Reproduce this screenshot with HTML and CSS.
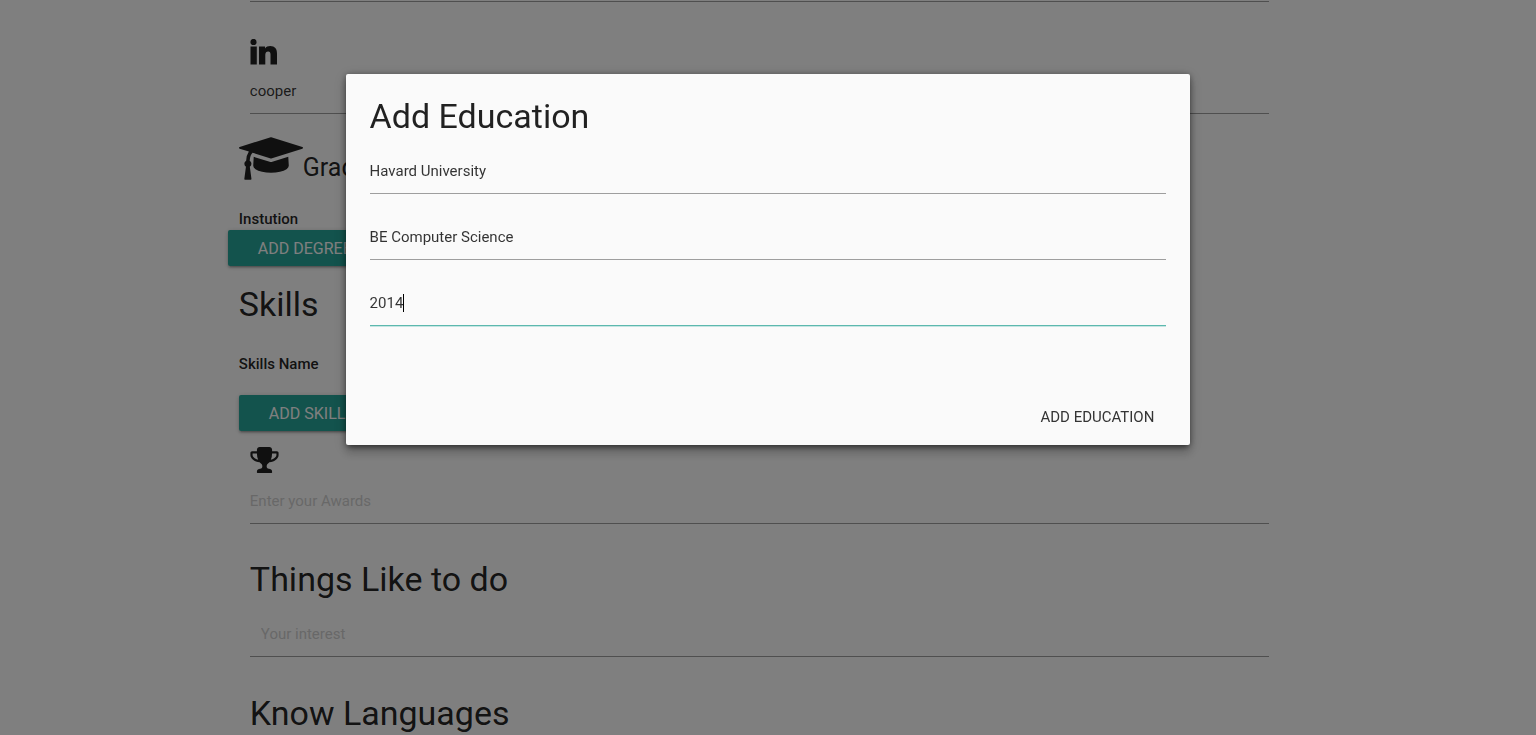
FILE: index.html
```html
<!DOCTYPE html>
<html lang="en">
<head>
<meta charset="utf-8">
<title>Add Education</title>
<link rel="stylesheet" href="styles.css">
</head>
<body>
<main class="page">
  <div class="container">
    <section class="inset previous"></section>

    <section class="inset profile">
      <svg class="icon-linkedin" viewBox="0 0 27 26" aria-hidden="true"><circle cx="3.500" cy="3" r="3.100"/><path d="M.5 7.500h6.300V25.500H.5zM9 7.500h6v2c1.200-1.600 3-2.400 5.200-2.400 4.700 0 6.800 2.800 6.800 7.400v11h-6.500v-10c0-2-.7-3.100-2.300-3.100-1.800 0-2.900 1.200-2.900 3.300v9.800H9z"/></svg>
      <input class="field" type="text" value="cooper" aria-label="LinkedIn">
    </section>

    <section class="column">
      <h5 class="subtitle">
        <svg class="icon-cap" viewBox="0 128 2304 1536" aria-hidden="true"><path d="M1774 836l18 316q4 69-82 128t-235 93.500-323 34.500-323-34.500-235-93.500-82-128l18-316 574 181q22 7 48 7t48-7zM2304 512q0 23-22 31l-1120 352q-4 1-10 1t-10-1l-652-206q-43 34-71 111.500t-34 178.500q63 36 63 109 0 69-58 107l58 433q2 14-8 25-9 11-24 11h-192q-15 0-24-11-10-11-8-25l58-433q-58-38-58-107 0-73 65-111 11-207 98-330l-333-104q-22-8-22-31t22-31l1120-352q4-1 10-1t10 1l1120 352q22 8 22 31z"/></svg>
        <span>Grad</span>
      </h5>
      <div class="label degree-label">Instution</div>
    </section>
    <button class="btn" type="button">Add Degree</button>

    <section class="column skills">
      <h4 class="title">Skills</h4>
      <div class="label skills-label">Skills Name</div>
      <button class="btn" type="button">Add Skill</button>
    </section>

    <section class="inset awards">
      <svg class="icon-trophy" viewBox="0 128 1664 1536" aria-hidden="true"><path d="M458 883q-74-162-74-371h-256v96q0 78 94.500 162t235.500 113zM1536 608v-96h-256q0 209-74 371 141-29 235.500-113t94.500-162zM1664 480v128q0 71-41.500 143t-112 130-173 97.500-215.500 44.500q-42 54-95 95-38 34-52.500 72.500t-14.500 89.500q0 54 30.500 91t97.500 37q75 0 133.500 45.500t58.500 114.500v64q0 14-9 23t-23 9h-832q-14 0-23-9t-9-23v-64q0-69 58.500-114.500t133.500-45.500q67 0 97.500-37t30.500-91q0-51-14.500-89.500t-52.500-72.500q-53-41-95-95-113-5-215.500-44.500t-173-97.500-112-130-41.500-143v-128q0-40 28-68t68-28h288v-96q0-66 47-113t113-47h576q66 0 113 47t47 113v96h288q40 0 68 28t28 68z"/></svg>
      <input class="field" type="text" placeholder="Enter your Awards" aria-label="Awards">
    </section>

    <section class="inset interests">
      <h4 class="title">Things Like to do</h4>
      <input class="field field-indented" type="text" placeholder="Your interest" aria-label="Interests">
    </section>

    <section class="inset languages">
      <h4 class="title">Know Languages</h4>
    </section>
  </div>
</main>

<div class="overlay"></div>
<div class="modal" role="dialog" aria-modal="true" aria-labelledby="modal-title">
  <form class="modal-content">
    <h4 class="title" id="modal-title">Add Education</h4>
    <div class="modal-fields">
      <input class="field" type="text" value="Havard University" aria-label="Institution">
      <input class="field" type="text" value="BE Computer Science" aria-label="Degree">
      <div class="field-active">
        <input class="field" type="text" value="2014" aria-label="Year">
        <span class="caret" aria-hidden="true"></span>
      </div>
    </div>
  </form>
  <div class="modal-footer">
    <button class="btn-flat" type="button">Add Education</button>
  </div>
</div>
</body>
</html>
```
FILE: styles.css
```css
* { box-sizing: border-box; }

body {
  margin: 0;
  color: rgba(0, 0, 0, 0.87);
  background: #fff;
  font: 15px/22px Roboto, "Liberation Sans", sans-serif;
}

svg { display: block; fill: currentColor; }

/* Page behind the dialog; the right padding is the scrollbar gutter */
.page {
  height: 100vh;
  overflow: hidden;
  padding: 1px 17px 0 0;
}
.container { width: 70%; margin: 0 auto; }
.column { padding: 0 11px; }
.inset { padding: 0 22px; }

.previous::after {
  content: "";
  display: block;
  border-top: 1px solid #9e9e9e;
}

.title {
  margin: 0;
  font-size: 34px;
  line-height: 36px;
  font-weight: 400;
}

.subtitle {
  display: flex;
  align-items: flex-end;
  margin: 23px 0 28px;
  font-size: 25px;
  line-height: 24px;
  font-weight: 400;
}

.label { font-weight: 500; }

.field {
  display: block;
  width: 100%;
  height: 46px;
  padding: 0;
  border: 0;
  border-bottom: 1px solid #9e9e9e;
  border-radius: 0;
  outline: none;
  background: transparent;
  color: rgba(0, 0, 0, 0.8);
  font: inherit;
}
.field::placeholder { color: #d1d1d1; opacity: 1; }
.field-indented { padding-left: 11px; }

.icon-linkedin { width: 27px; height: 26px; margin-bottom: 3px; }
.icon-cap { width: 64px; height: 43px; }
.icon-trophy { width: 29px; height: 26px; margin-bottom: 5px; }

.btn {
  display: block;
  height: 36px;
  padding: 2px 30px 0;
  border: 0;
  border-radius: 2px;
  background: #26a69a;
  color: #fff;
  font: inherit;
  font-size: 16px;
  text-transform: uppercase;
  box-shadow: 0 2px 2px rgba(0, 0, 0, 0.14), 0 3px 1px -2px rgba(0, 0, 0, 0.12), 0 1px 5px rgba(0, 0, 0, 0.2);
}

.profile { padding-top: 37px; }
.skills { padding-top: 20px; }
.skills-label { margin: 31px 0 20px; }
.awards { padding-top: 16px; }
.interests { padding-top: 37px; }
.interests .title { margin-bottom: 14px; }
.languages { padding-top: 38px; }

/* Dialog */
.overlay {
  position: fixed;
  inset: 0;
  background: rgba(0, 0, 0, 0.5);
}

.modal {
  position: fixed;
  top: 10%;
  left: 0;
  right: 0;
  width: 55%;
  margin: 0 auto;
  border-radius: 2px;
  background: #fafafa;
  box-shadow: 0 8px 10px 1px rgba(0, 0, 0, 0.14), 0 3px 14px 2px rgba(0, 0, 0, 0.12), 0 5px 5px -3px rgba(0, 0, 0, 0.3), 0 1px 6px rgba(0, 0, 0, 0.4);
}
.modal-content { padding: 24px 24px 63px; }
.modal-content .title { margin-bottom: 15px; }
.modal-fields { display: grid; gap: 21px; }
.modal-fields .field {
  height: 45px;
  padding-top: 1px;
}

.field-active { position: relative; }
.field-active .field {
  border-bottom-color: #5cb8ae;
  box-shadow: 0 1px 0 rgba(38, 166, 154, 0.25);
}
.caret {
  position: absolute;
  top: 13px;
  left: 33px;
  width: 1px;
  height: 18px;
  background: #000;
}

.modal-footer {
  display: flex;
  justify-content: flex-end;
  align-items: center;
  height: 56px;
  padding: 0 6px;
}
.btn-flat {
  height: 36px;
  padding: 0 30px;
  border: 0;
  background: transparent;
  color: #343434;
  font: inherit;
  text-transform: uppercase;
}
```
